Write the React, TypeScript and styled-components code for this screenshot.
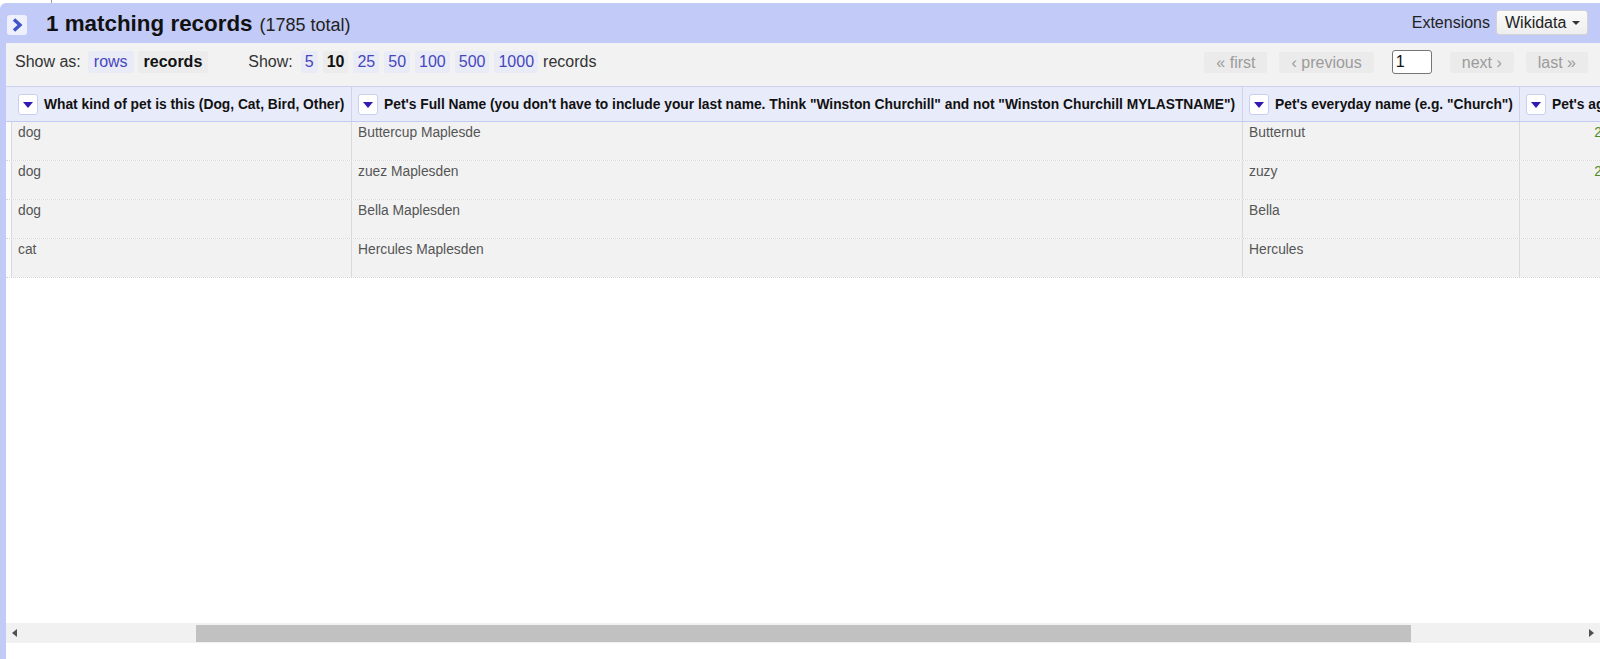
import React from 'react';
import styled, { createGlobalStyle } from 'styled-components';

const GlobalStyle = createGlobalStyle`
  html, body {
    margin: 0;
    padding: 0;
    background: #ffffff;
  }
  body {
    font-family: "Liberation Sans", Arial, sans-serif;
    color: #222;
  }
`;

const BLUE = '#c2caf7';

const Page = styled.div`
  display: flex;
  flex-direction: column;
  width: 1600px;
  height: 659px;
  overflow: hidden;
`;

const TopStrip = styled.div`
  height: 3px;
  display: flex;
`;

const TopTick = styled.span`
  width: 1px;
  height: 3px;
  margin-left: 51px;
  background: #9a9a9a;
`;

const Panel = styled.div`
  flex: 1;
  display: flex;
  flex-direction: column;
  min-height: 0;
  background: ${BLUE};
  border-top-left-radius: 6px;
`;

const Header = styled.div`
  height: 40px;
  display: flex;
  align-items: center;
  padding: 2px 12px 0 7px;
  box-sizing: border-box;
`;

const Toggle = styled.button`
  width: 20px;
  height: 20px;
  padding: 0;
  margin-top: 2px;
  border: none;
  border-radius: 3px;
  background: #eef0fd;
  display: flex;
  align-items: center;
  justify-content: center;
`;

const Title = styled.h1`
  margin: 0 0 0 19px;
  font-size: 22.4px;
  font-weight: bold;
  color: #111;
`;

const TitleCount = styled.span`
  margin-left: 7px;
  font-size: 18px;
  color: #222;
  padding-top: 3px;
`;

const HeaderRight = styled.div`
  margin-left: auto;
  display: flex;
  align-items: center;
  gap: 6px;
  margin-top: -3px;
`;

const ExtLabel = styled.span`
  font-size: 16px;
  color: #222;
`;

const MenuButton = styled.button`
  width: 92px;
  height: 25px;
  padding: 0 0 0 8px;
  display: flex;
  align-items: center;
  gap: 6px;
  font-family: "Liberation Sans", Arial, sans-serif;
  font-size: 16px;
  color: #222;
  background: linear-gradient(#fafafa, #eeeeee);
  border: 1px solid #d3d3d3;
  border-radius: 3px;
`;

const Caret = styled.span`
  width: 0;
  height: 0;
  border-left: 4px solid transparent;
  border-right: 4px solid transparent;
  border-top: 4px solid #333;
`;

const Body = styled.div`
  flex: 1;
  min-height: 0;
  padding-left: 6px;
  display: flex;
`;

const Content = styled.div`
  flex: 1;
  min-width: 0;
  background: #ffffff;
  display: flex;
  flex-direction: column;
  overflow: hidden;
`;

const Toolbar = styled.div`
  height: 43px;
  flex-shrink: 0;
  box-sizing: border-box;
  display: flex;
  align-items: center;
  padding: 0 12px 5px 9px;
  background: #f2f2f2;
  font-size: 16px;
  color: #333;
`;

const Group = styled.div<{ $gap: number; $ml?: number }>`
  display: flex;
  align-items: center;
  gap: ${({ $gap }) => $gap}px;
  margin-left: ${({ $ml }) => $ml ?? 0}px;
`;

const Label = styled.span`
  color: #333;
  margin-right: 3px;
`;

const Pill = styled.span<{ $current?: boolean }>`
  padding: 0 4px;
  line-height: 22px;
  border-radius: 2px;
  color: ${({ $current }) => ($current ? '#111' : '#4646bd')};
  font-weight: ${({ $current }) => ($current ? 'bold' : 'normal')};
  background: ${({ $current }) => ($current ? '#ececec' : '#e9ebf7')};
`;

const RowsPill = styled(Pill)`
  padding: 0 6px;
`;

const Pager = styled.div`
  margin-left: auto;
  display: flex;
  align-items: center;
  gap: 12px;
`;

const PageButton = styled.span`
  padding: 0 12px;
  line-height: 21px;
  color: #9b9b9b;
  background: #ebebeb;
  border-radius: 2px;
`;

const PageInput = styled.input`
  width: 40px;
  height: 24px;
  margin: 0 6px;
  padding: 0 3px;
  box-sizing: border-box;
  font-family: "Liberation Sans", Arial, sans-serif;
  font-size: 16px;
  color: #111;
  background: #fff;
  border: 1px solid #767676;
  border-radius: 3px;
`;

const HeaderRow = styled.div`
  height: 36px;
  flex-shrink: 0;
  display: flex;
  box-sizing: border-box;
  background: #e8ebfa;
  border-top: 1px solid #cdd2f3;
  border-bottom: 1px solid #c4caf1;
`;

const Row = styled.div`
  height: 39px;
  flex-shrink: 0;
  display: flex;
  box-sizing: border-box;
  border-bottom: 1px dotted #d6d6d6;
`;

const Lead = styled.div<{ $body?: boolean }>`
  width: 6px;
  flex-shrink: 0;
  box-sizing: border-box;
  background: ${({ $body }) => ($body ? '#fbfbfb' : 'transparent')};
  border-right: ${({ $body }) => ($body ? '1px solid #d9d9d9' : 'none')};
`;

const HeadCell = styled.div<{ $w: number }>`
  width: ${({ $w }) => $w}px;
  flex-shrink: 0;
  box-sizing: border-box;
  display: flex;
  align-items: center;
  gap: 6px;
  padding-left: 6px;
  border-right: 1px solid #cfd3ee;
  font-size: 13.8px;
  font-weight: bold;
  color: #111;
  white-space: nowrap;
`;

const ColButton = styled.button`
  width: 20px;
  height: 21px;
  padding: 0;
  flex-shrink: 0;
  display: flex;
  align-items: center;
  justify-content: center;
  background: #ffffff;
  border: 1px solid #c9cef3;
  border-radius: 3px;
`;

const ColArrow = styled.span`
  width: 0;
  height: 0;
  margin-top: 1px;
  border-left: 5px solid transparent;
  border-right: 5px solid transparent;
  border-top: 6px solid #2f1bb0;
`;

const Cell = styled.div<{ $w: number; $num?: boolean }>`
  width: ${({ $w }) => $w}px;
  flex-shrink: 0;
  box-sizing: border-box;
  padding: 3px 7px 0 6px;
  background: #f2f2f2;
  border-right: 1px solid #dadada;
  font-size: 13.8px;
  line-height: 16px;
  color: ${({ $num }) => ($num ? '#4f8a2c' : '#555')};
  text-align: ${({ $num }) => ($num ? 'right' : 'left')};
  white-space: nowrap;
`;

const Filler = styled.div`
  flex: 1;
  background: #ffffff;
`;

const Scrollbar = styled.div`
  height: 20px;
  flex-shrink: 0;
  display: flex;
  align-items: center;
  background: #f1f1f1;
`;

const ScrollArrow = styled.span<{ $dir: 'left' | 'right' }>`
  width: 17px;
  height: 20px;
  flex-shrink: 0;
  display: flex;
  align-items: center;
  justify-content: center;
  &::before {
    content: '';
    width: 0;
    height: 0;
    border-top: 4px solid transparent;
    border-bottom: 4px solid transparent;
    ${({ $dir }) =>
      $dir === 'left'
        ? 'border-right: 5px solid #505050;'
        : 'border-left: 5px solid #505050;'}
  }
`;

const Track = styled.div`
  flex: 1;
  height: 17px;
  display: flex;
`;

const Thumb = styled.div`
  height: 17px;
  background: #c1c1c1;
`;

const BottomSpace = styled.div`
  height: 16px;
  flex-shrink: 0;
  background: #ffffff;
`;

const columns = [
  { title: 'What kind of pet is this (Dog, Cat, Bird, Other)', width: 340 },
  {
    title:
      'Pet\'s Full Name (you don\'t have to include your last name. Think "Winston Churchill" and not "Winston Churchill MYLASTNAME")',
    width: 891,
  },
  { title: 'Pet\'s everyday name (e.g. "Church")', width: 277 },
  { title: 'Pet\'s age (in years)', width: 90 },
];

const rows = [
  ['dog', 'Buttercup Maplesde', 'Butternut', '2'],
  ['dog', 'zuez Maplesden', 'zuzy', '2'],
  ['dog', 'Bella Maplesden', 'Bella', ''],
  ['cat', 'Hercules Maplesden', 'Hercules', ''],
];

const pageSizes = ['5', '10', '25', '50', '100', '500', '1000'];

function Chevron(): React.ReactElement {
  return (
    <svg width="12" height="14" viewBox="0 0 12 14">
      <polyline
        points="3,1.5 9,7 3,12.5"
        fill="none"
        stroke="#3f55c9"
        strokeWidth="3.4"
        strokeLinejoin="miter"
      />
    </svg>
  );
}

export default function App(): React.ReactElement {
  const thumbLeft = 173;
  const thumbWidth = 1215;

  return (
    <Page>
      <GlobalStyle />
      <TopStrip>
        <TopTick />
      </TopStrip>
      <Panel>
        <Header>
          <Toggle aria-label="toggle">
            <Chevron />
          </Toggle>
          <Title>1 matching records</Title>
          <TitleCount>(1785 total)</TitleCount>
          <HeaderRight>
            <ExtLabel>Extensions</ExtLabel>
            <MenuButton>
              Wikidata
              <Caret />
            </MenuButton>
          </HeaderRight>
        </Header>
        <Body>
          <Content>
            <Toolbar>
              <Group $gap={4}>
                <Label>Show as:</Label>
                <RowsPill>rows</RowsPill>
                <RowsPill $current>records</RowsPill>
              </Group>
              <Group $gap={5} $ml={40}>
                <Label>Show:</Label>
                {pageSizes.map((s) => (
                  <Pill key={s} $current={s === '10'}>
                    {s}
                  </Pill>
                ))}
                <Label>records</Label>
              </Group>
              <Pager>
                <PageButton>« first</PageButton>
                <PageButton>‹ previous</PageButton>
                <PageInput defaultValue="1" />
                <PageButton>next ›</PageButton>
                <PageButton>last »</PageButton>
              </Pager>
            </Toolbar>
            <HeaderRow>
              <Lead />
              {columns.map((c) => (
                <HeadCell key={c.title} $w={c.width}>
                  <ColButton aria-label="column menu">
                    <ColArrow />
                  </ColButton>
                  {c.title}
                </HeadCell>
              ))}
            </HeaderRow>
            {rows.map((r, i) => (
              <Row key={i}>
                <Lead $body />
                {r.map((v, j) => (
                  <Cell key={j} $w={columns[j].width} $num={j === 3}>
                    {v}
                  </Cell>
                ))}
              </Row>
            ))}
            <Filler />
            <Scrollbar>
              <ScrollArrow $dir="left" />
              <Track>
                <Thumb style={{ marginLeft: thumbLeft, width: thumbWidth }} />
              </Track>
              <ScrollArrow $dir="right" />
            </Scrollbar>
            <BottomSpace />
          </Content>
        </Body>
      </Panel>
    </Page>
  );
}
